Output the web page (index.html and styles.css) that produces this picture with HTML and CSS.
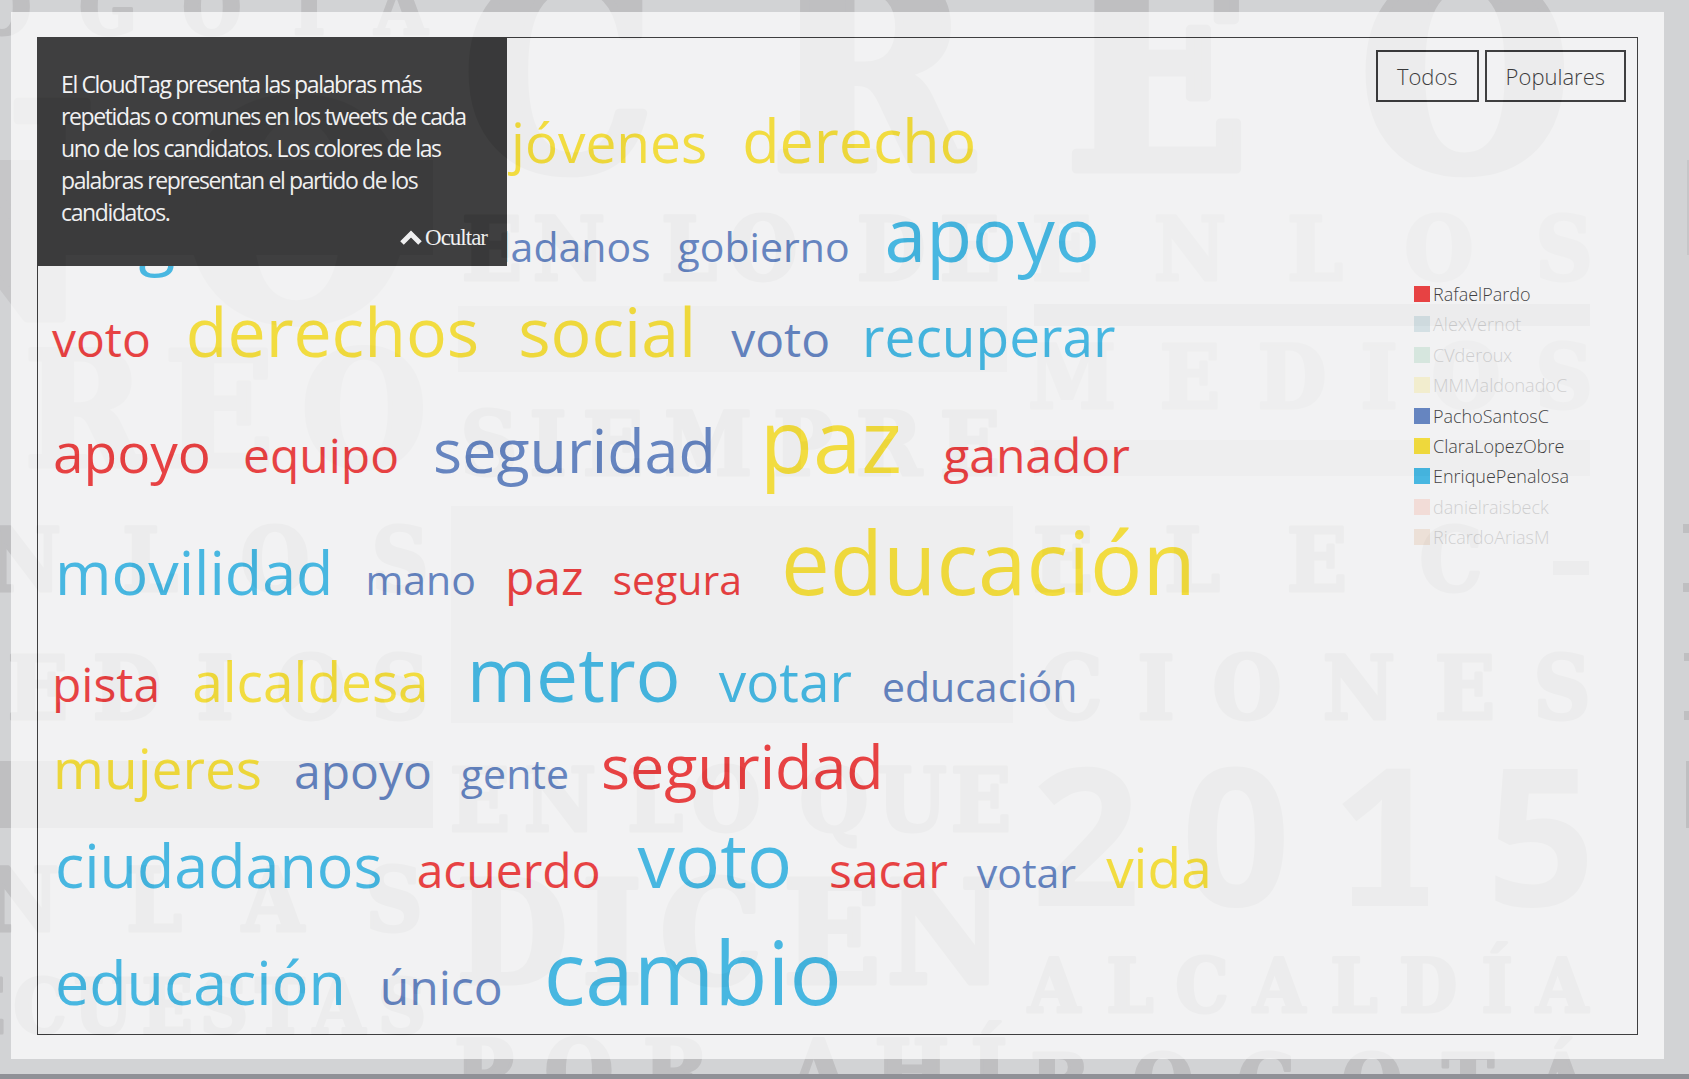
FILE: index.html
```html
<!DOCTYPE html>
<html lang="es">
<head>
<meta charset="utf-8">
<title>CloudTag</title>
<meta name="viewport" content="width=device-width, initial-scale=1">
<link rel="stylesheet" href="styles.css">
</head>
<body>
<svg class="backdrop" viewBox="0 0 1689 1079" preserveAspectRatio="xMinYMin slice" aria-hidden="true">
  <g class="soft">
    <rect x="0" y="160" width="433" height="95"/>
    <rect x="458" y="306" width="549" height="66"/>
    <rect x="1034" y="440" width="556" height="36"/>
    <rect x="451" y="506" width="562" height="217"/>
    <rect x="1687" y="160" width="2" height="95"/>
    <text class="huge" font-size="296" y="318" x="-25 297">NO</text>
    <text class="big" font-size="160" y="466" x="84 219 364">REO</text>
    <text font-size="88" y="280" x="1062 1190 1315 1439 1564">ENLOS</text>
    <text font-size="88" y="408" x="1072 1190 1292 1379 1466 1564">MEDIOS</text>
  </g>
  <g class="strong">
    <rect x="1034" y="304" width="556" height="22"/>
    <rect x="1553" y="561" width="36" height="14"/>
    <rect x="0" y="761" width="433" height="67"/>
    <rect x="1686" y="761" width="3" height="67"/>
    <rect x="1683" y="524" width="6" height="9"/>
    <rect x="1683" y="583" width="6" height="9"/>
    <rect x="1684" y="653" width="5" height="8"/>
    <rect x="1684" y="711" width="5" height="9"/>
    <text font-size="75" y="34" x="2 108 212 309 401">OGOTA</text>
    <text class="huge" font-size="268" y="169" x="559 871 1157 1465">CREO</text>
    <text font-size="88" y="280" x="492 569 689 763 891 970">ENLODE</text>
    <text font-size="88" y="475" x="489 548 613 708 803 889 970">SIEMPRE</text>
    <text font-size="88" y="591" x="25 150 275 400">NLOS</text>
    <text font-size="88" y="591" x="1063 1192 1317 1451">ELEC</text>
    <text font-size="88" y="719" x="-44 38 127 215 311 400">MEDIOS</text>
    <text font-size="88" y="719" x="1071 1156 1247 1359 1465 1562">CIONES</text>
    <text font-size="88" y="831" x="480 560 655 726 834 912 981">ENLOQUE</text>
    <text class="digits" font-size="192" y="906" x="1086 1236 1386 1541">2015</text>
    <rect x="1352" y="887" width="76" height="19"/>
    <text font-size="88" y="931" x="23 154 273 394">NLAS</text>
    <text class="big" font-size="142" y="983" x="512 612 711 832 945">DICEN</text>
    <text font-size="74" y="1012" x="1054 1130 1202 1279 1354 1428 1497 1562">ALCALDÍA</text>
    <text font-size="74" y="1033" x="-20 40 103 167 224 280 339 402">ECUESTAS</text>
    <text font-size="88" y="1103" x="484 579 676 819 912 989">PORAHÍ</text>
    <text font-size="77" y="1109" x="1060 1163 1267 1372 1468 1562">BOGOTÁ</text>
  </g>
</svg>

<div class="sheet">
  <main class="frame">
    <section class="cloud" aria-label="Nube de palabras">
      <div class="row row-first"><span class="w s3 yellow">jóvenes</span><span class="w s4 yellow">derecho</span></div>
      <div class="row"><span class="w s5 cyan lead">bogotá</span><span class="w s1 blue">ciudadanos</span><span class="w s1 blue">gobierno</span><span class="w s6 cyan">apoyo</span></div>
      <div class="row"><span class="w s2 red">voto</span><span class="w s5 yellow">derechos</span><span class="w s5 yellow">social</span><span class="w s2 blue">voto</span><span class="w s3 cyan">recuperar</span></div>
      <div class="row"><span class="w s3 red">apoyo</span><span class="w s2 red">equipo</span><span class="w s4 blue">seguridad</span><span class="w s7 yellow">paz</span><span class="w s2 red">ganador</span></div>
      <div class="row"><span class="w s4 cyan">movilidad</span><span class="w s1 blue">mano</span><span class="w s2 red">paz</span><span class="w s1 red">segura</span><span class="w s7 yellow">educación</span></div>
      <div class="row"><span class="w s2 red">pista</span><span class="w s3 yellow">alcaldesa</span><span class="w s6 cyan">metro</span><span class="w s3 cyan">votar</span><span class="w s1 blue">educación</span></div>
      <div class="row"><span class="w s3 yellow">mujeres</span><span class="w s2 blue">apoyo</span><span class="w s1 blue">gente</span><span class="w s4 red">seguridad</span></div>
      <div class="row"><span class="w s4 cyan">ciudadanos</span><span class="w s2 red">acuerdo</span><span class="w s6 cyan">voto</span><span class="w s2 red">sacar</span><span class="w s1 blue">votar</span><span class="w s3 yellow">vida</span></div>
      <div class="row"><span class="w s4 cyan">educación</span><span class="w s2 blue">único</span><span class="w s7 cyan">cambio</span></div>
    </section>

    <aside class="side">
      <div class="actions">
        <button class="btn" type="button">Todos</button>
        <button class="btn" type="button">Populares</button>
      </div>
      <ul class="legend">
        <li class="item"><span class="swatch bg-red"></span>RafaelPardo</li>
        <li class="item off"><span class="swatch bg-teal"></span>AlexVernot</li>
        <li class="item off"><span class="swatch bg-green"></span>CVderoux</li>
        <li class="item off"><span class="swatch bg-yellow"></span>MMMaldonadoC</li>
        <li class="item"><span class="swatch bg-blue"></span>PachoSantosC</li>
        <li class="item"><span class="swatch bg-yellow"></span>ClaraLopezObre</li>
        <li class="item"><span class="swatch bg-cyan"></span>EnriquePenalosa</li>
        <li class="item off"><span class="swatch bg-orange"></span>danielraisbeck</li>
        <li class="item off"><span class="swatch bg-brown"></span>RicardoAriasM</li>
      </ul>
    </aside>

    <div class="info">
      <p class="info-text">El CloudTag presenta las palabras más repetidas o comunes en los tweets de cada uno de los candidatos. Los colores de las palabras representan el partido de los candidatos.</p>
      <button class="hide" type="button"><svg class="chevron" viewBox="0 0 22 16" aria-hidden="true"><path d="M2 13 L11 4 L20 13" fill="none" stroke="currentColor" stroke-width="5"/></svg>Ocultar</button>
    </div>
  </main>
</div>
<div class="strip"></div>
</body>
</html>
```
FILE: styles.css
```css
* { box-sizing: border-box; }

body {
  margin: 0;
  min-height: 100vh;
  display: flex;
  flex-direction: column;
  background: #d2d3d5;
  font-family: "Open Sans", "Noto Sans", sans-serif;
  overflow-x: hidden;
}

.backdrop {
  position: fixed;
  inset: 0;
  width: 100%;
  height: 100%;
  z-index: -1;
  font-family: "DejaVu Serif Condensed", "DejaVu Serif", serif;
  font-weight: 700;
  text-anchor: middle;
}
.backdrop text { stroke-width: 3px; stroke-linejoin: round; }
.backdrop .big { stroke-width: 5px; }
.backdrop .huge { stroke-width: 9px; }
.backdrop .digits { stroke-width: 0; font-family: "Open Sans", sans-serif; }
.soft { fill: #c6c6c8; }
.soft text { stroke: #c6c6c8; }
.strong { fill: #bfbfc1; }
.strong text { stroke: #bfbfc1; }

.sheet {
  flex: 1;
  display: flex;
  margin: 12px 25px 15px 11px;
  padding: 25px 26px 24px 26px;
  background: #fff;
  opacity: .7;
}

.frame {
  flex: 1;
  position: relative;
  display: grid;
  grid-template-columns: minmax(0, 1fr) 264px;
  border: 1px solid #000;
}

.cloud { padding: 60px 0 0 1px; }
.row { display: flex; align-items: baseline; gap: 5px; white-space: nowrap; }
.row-first { padding-left: 458px; }

.s1 { font-size: 41px; line-height: 57px; margin: 0 11px; }
.s2 { font-size: 48px; line-height: 66px; margin: 0 13px; }
.s3 { font-size: 55px; line-height: 76px; margin: 0 14px; }
.s4 { font-size: 61px; line-height: 84px; margin: 0 16px; }
.s5 { font-size: 68px; line-height: 94px; margin: 0 17px; }
.s6 { font-size: 75px; line-height: 102px; margin: 0 19px; }
.s7 { font-size: 87px; line-height: 122px; margin: 0 23px; }
.lead { margin-right: 136px; }

.red { color: #f00505; }
.yellow { color: #ffe000; }
.blue { color: #3864b7; }
.cyan { color: #0eace6; }

.actions {
  display: flex;
  justify-content: flex-end;
  gap: 6px;
  padding: 12px 11px 0 0;
}
.btn {
  height: 52px;
  padding: 0 19px;
  border: 2px solid #000;
  background: transparent;
  color: #000;
  font: 300 22px/44px "Open Sans", sans-serif;
}

.legend {
  display: flex;
  flex-direction: column;
  justify-content: space-between;
  height: 273px;
  margin: 177px 0 0 41px;
  padding: 0;
  list-style: none;
}
.item {
  display: flex;
  align-items: center;
  gap: 3px;
  height: 30px;
  color: #000;
  font-size: 18px;
  font-weight: 300;
}
.off { opacity: .2; }
.swatch { width: 16px; height: 16px; }
.bg-red { background: #f00505; }
.bg-teal { background: #2f7f99; }
.bg-green { background: #3fae72; }
.bg-yellow { background: #ffe000; }
.bg-blue { background: #3864b7; }
.bg-cyan { background: #0eace6; }
.bg-orange { background: #ff6a3c; }
.bg-brown { background: #d8803c; }

.info {
  position: absolute;
  top: -1px;
  left: -1px;
  width: 470px;
  height: 229px;
  padding: 31px 20px 0 24px;
  background: #000;
  color: #fff;
}
.info-text {
  margin: 0;
  font-size: 23px;
  line-height: 32px;
  letter-spacing: -.06em;
}
.hide {
  position: absolute;
  right: 20px;
  bottom: 16px;
  display: flex;
  align-items: center;
  gap: 3px;
  padding: 0;
  border: 0;
  background: none;
  color: #fff;
  font: 23px/24px "Liberation Serif", serif;
  letter-spacing: -1px;
}
.chevron { width: 22px; height: 16px; }

.strip { height: 5px; background: #909197; }
```
